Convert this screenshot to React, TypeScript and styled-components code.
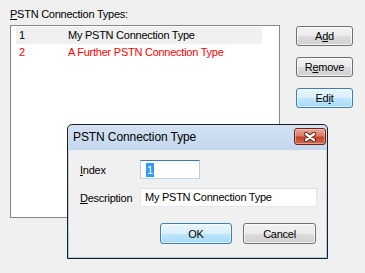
import React from 'react'
import styled, { createGlobalStyle, css } from 'styled-components'

const GlobalStyle = createGlobalStyle`
  html, body {
    margin: 0;
    padding: 0;
    background: #f0f0f0;
  }
  body {
    font-family: "Liberation Sans", Arial, sans-serif;
    font-size: 11px;
    color: #000;
  }
`

const Screen = styled.div`
  position: relative;
  width: 365px;
  height: 273px;
  box-sizing: border-box;
  padding: 8px 0 0 10px;
  display: flex;
  align-items: flex-start;
  background: #f0f0f0;
  letter-spacing: -0.25px;
  overflow: hidden;
`

const LeftColumn = styled.div`
  display: flex;
  flex-direction: column;
`

const FieldLabel = styled.div`
  line-height: 13px;
  margin-bottom: 4px;
`

const ListBox = styled.div`
  width: 270px;
  height: 193px;
  box-sizing: border-box;
  border: 1px solid #828790;
  background: #fff;
  padding: 1px 0 0 5px;
`

const ListRow = styled.div<{ $selected?: boolean; $alert?: boolean }>`
  display: flex;
  width: 246px;
  height: 17px;
  line-height: 17px;
  color: ${(p) => (p.$alert ? '#ff0000' : '#000')};
  background: ${(p) => (p.$selected ? '#f0f0f0' : 'transparent')};
`

const IndexCell = styled.span`
  width: 52px;
  padding-left: 3px;
  box-sizing: border-box;
`

const ButtonColumn = styled.div`
  display: flex;
  flex-direction: column;
  gap: 11px;
  margin-left: 16px;
  padding-top: 18px;
`

const PushButton = styled.button<{ $width?: number; $height?: number; $focused?: boolean }>`
  width: ${(p) => p.$width ?? 57}px;
  height: ${(p) => p.$height ?? 20}px;
  box-sizing: border-box;
  padding: 0;
  font: inherit;
  letter-spacing: inherit;
  color: #000;
  border-radius: 3px;
  border: 1px solid #707070;
  background: linear-gradient(#f2f2f2 0%, #ebebeb 50%, #dddddd 51%, #cfcfcf 100%);
  box-shadow: inset 0 0 0 1px rgba(255, 255, 255, 0.7);
  ${(p) =>
    p.$focused &&
    css`
      border-color: #3c7fb1;
      background: linear-gradient(#eaf6fd 0%, #d9f0fc 50%, #bee6fd 51%, #a7d9f5 100%);
      box-shadow: inset 0 0 0 1px rgba(255, 255, 255, 0.6);
    `}
`

const Dialog = styled.div`
  position: absolute;
  left: 67px;
  top: 124px;
  width: 261px;
  height: 135px;
  box-sizing: border-box;
  border: 1px solid #1e1e1e;
  border-radius: 5px 5px 0 0;
  background: linear-gradient(#d3e2f3, #c2d6ed 28px, #aacbea);
  display: flex;
  flex-direction: column;
  letter-spacing: -0.25px;
`

const TitleBar = styled.div`
  height: 25px;
  display: flex;
  align-items: flex-start;
  justify-content: space-between;
  padding: 3px 1px 0 5px;
  box-sizing: border-box;
`

const TitleText = styled.span`
  font-size: 12px;
  line-height: 18px;
  letter-spacing: -0.1px;
  color: #000;
`

const CloseButton = styled.div`
  width: 32px;
  height: 17px;
  box-sizing: border-box;
  border: 1px solid #6d2219;
  border-radius: 3px;
  background: linear-gradient(#e9a99a 0%, #d87b66 45%, #c2442d 55%, #d0694f 100%);
  box-shadow: inset 0 0 0 1px rgba(255, 210, 200, 0.5);
  display: flex;
  align-items: center;
  justify-content: center;
`

const DialogBody = styled.div`
  flex: 1;
  margin: 0 1px 1px 1px;
  background: #f0f0f0;
  padding: 10px 9px 0 11px;
  display: flex;
  flex-direction: column;
`

const FormGrid = styled.div`
  display: grid;
  grid-template-columns: 60px 1fr;
  row-gap: 9px;
  align-items: center;
`

const TextBox = styled.div<{ $width: number; $focused?: boolean }>`
  width: ${(p) => p.$width}px;
  height: 19px;
  box-sizing: border-box;
  background: #fff;
  border: 1px solid;
  border-color: ${(p) =>
    p.$focused ? '#3d7bad #b5cfe7 #b7d9ed #b5cfe7' : '#dadce3 #e2e3ea #e3e9ef #e2e3ea'};
  padding: 0 0 0 4px;
  line-height: 17px;
  display: flex;
  align-items: center;
`

const Selected = styled.span`
  background: #3399ff;
  color: #fff;
  line-height: 14px;
  padding: 0 1px;
  margin-left: 1px;
`

const DialogButtons = styled.div`
  display: flex;
  justify-content: flex-end;
  gap: 11px;
  margin-top: 16px;
  padding-right: 1px;
`

const CloseGlyph = () => (
  <svg width="16" height="10" viewBox="0 0 16 10">
    <path d="M4 2 L12 8 M12 2 L4 8" stroke="#5a1d14" strokeWidth="4.2" strokeLinecap="round" />
    <path d="M4 2 L12 8 M12 2 L4 8" stroke="#ffffff" strokeWidth="2.4" strokeLinecap="round" />
  </svg>
)

const rows = [
  { index: '1', name: 'My PSTN Connection Type', selected: true, alert: false },
  { index: '2', name: 'A Further PSTN Connection Type', selected: false, alert: true },
]

export default function App() {
  return (
    <>
      <GlobalStyle />
      <Screen>
        <LeftColumn>
          <FieldLabel>
            <u>P</u>STN Connection Types:
          </FieldLabel>
          <ListBox>
            {rows.map((r) => (
              <ListRow key={r.index} $selected={r.selected} $alert={r.alert}>
                <IndexCell>{r.index}</IndexCell>
                <span>{r.name}</span>
              </ListRow>
            ))}
          </ListBox>
        </LeftColumn>
        <ButtonColumn>
          <PushButton>
            A<u>d</u>d
          </PushButton>
          <PushButton>
            R<u>e</u>move
          </PushButton>
          <PushButton $focused>
            Ed<u>i</u>t
          </PushButton>
        </ButtonColumn>

        <Dialog>
          <TitleBar>
            <TitleText>PSTN Connection Type</TitleText>
            <CloseButton>
              <CloseGlyph />
            </CloseButton>
          </TitleBar>
          <DialogBody>
            <FormGrid>
              <span>
                <u>I</u>ndex
              </span>
              <TextBox $width={60} $focused>
                <Selected>1</Selected>
              </TextBox>
              <span>
                <u>D</u>escription
              </span>
              <TextBox $width={177}>My PSTN Connection Type</TextBox>
            </FormGrid>
            <DialogButtons>
              <PushButton $width={72} $height={21} $focused>
                OK
              </PushButton>
              <PushButton $width={73} $height={21}>
                Cancel
              </PushButton>
            </DialogButtons>
          </DialogBody>
        </Dialog>
      </Screen>
    </>
  )
}
